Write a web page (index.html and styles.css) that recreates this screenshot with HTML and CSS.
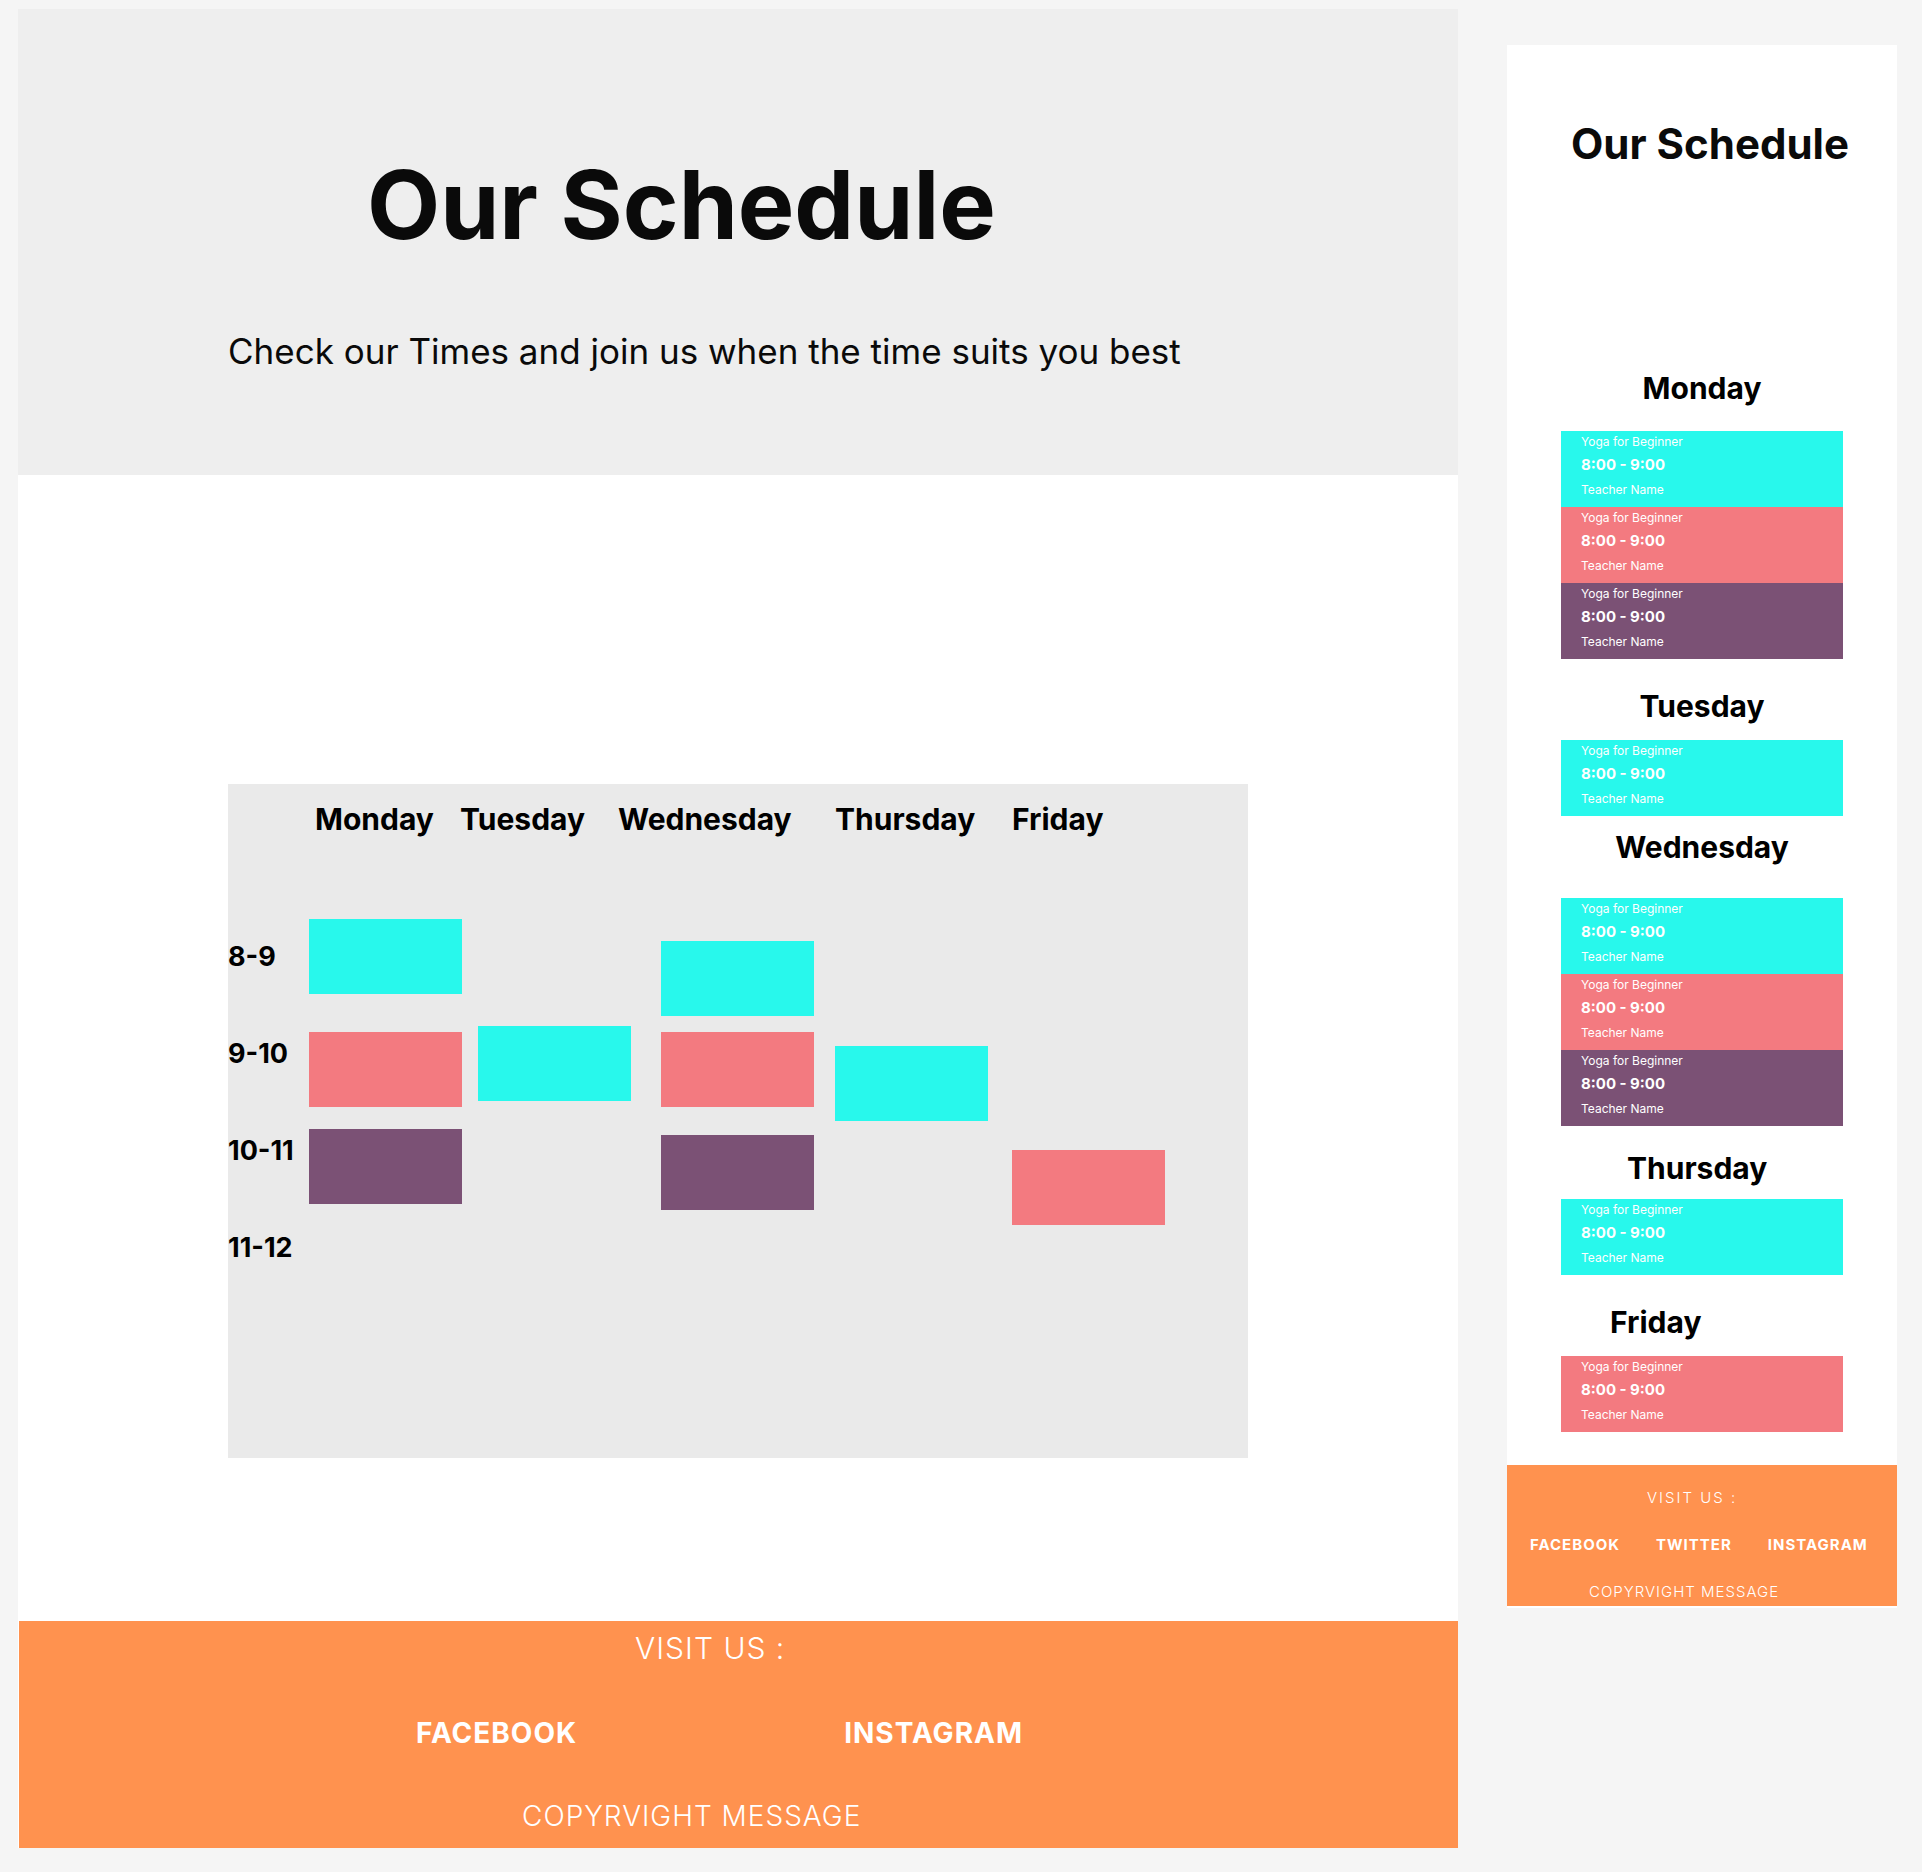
FILE: index.html
```html
<!DOCTYPE html>
<html lang="en">
<head>
  <meta charset="utf-8">
  <meta name="viewport" content="width=device-width, initial-scale=1">
  <title>Our Schedule</title>
  <link rel="stylesheet" href="styles.css">
</head>
<body>
  <div class="board">
    <section class="desktop" aria-label="Desktop schedule">
      <header class="hero">
        <h1 class="hero-title">Our Schedule</h1>
        <p class="hero-text">Check our Times and join us when the time suits you best</p>
      </header>

      <div class="desktop-body">
        <table class="timetable">
          <thead>
            <tr>
              <td></td>
              <th scope="col">Monday</th>
              <th scope="col">Tuesday</th>
              <th scope="col">Wednesday</th>
              <th scope="col">Thursday</th>
              <th scope="col">Friday</th>
            </tr>
          </thead>
          <tbody>
            <tr>
              <th scope="row">8-9</th>
              <td><div class="slot cyan"></div></td>
              <td></td>
              <td><div class="slot cyan late"></div></td>
              <td></td>
              <td></td>
            </tr>
            <tr>
              <th scope="row">9-10</th>
              <td><div class="slot pink quarter"></div></td>
              <td><div class="slot cyan early"></div></td>
              <td><div class="slot pink quarter"></div></td>
              <td><div class="slot cyan half"></div></td>
              <td></td>
            </tr>
            <tr>
              <th scope="row">10-11</th>
              <td><div class="slot purple quarter"></div></td>
              <td></td>
              <td><div class="slot purple late"></div></td>
              <td></td>
              <td><div class="slot pink last"></div></td>
            </tr>
            <tr>
              <th scope="row">11-12</th>
              <td></td>
              <td></td>
              <td></td>
              <td></td>
              <td></td>
            </tr>
          </tbody>
        </table>
      </div>

      <footer class="footer footer-wide">
        <p class="visit">VISIT US :</p>
        <nav class="social" aria-label="Social media">
          <a href="#facebook">FACEBOOK</a>
          <a href="#instagram">INSTAGRAM</a>
        </nav>
        <p class="copyright">COPYRVIGHT MESSAGE</p>
      </footer>
    </section>

    <section class="mobile" aria-label="Mobile schedule">
      <h2 class="mobile-title">Our Schedule</h2>

      <div class="days">
        <section class="day monday">
          <h3>Monday</h3>
          <article class="lesson cyan">
            <p>Yoga for Beginner</p>
            <p class="time">8:00 - 9:00</p>
            <p>Teacher Name</p>
          </article>
          <article class="lesson pink">
            <p>Yoga for Beginner</p>
            <p class="time">8:00 - 9:00</p>
            <p>Teacher Name</p>
          </article>
          <article class="lesson purple">
            <p>Yoga for Beginner</p>
            <p class="time">8:00 - 9:00</p>
            <p>Teacher Name</p>
          </article>
        </section>

        <section class="day tuesday">
          <h3>Tuesday</h3>
          <article class="lesson cyan">
            <p>Yoga for Beginner</p>
            <p class="time">8:00 - 9:00</p>
            <p>Teacher Name</p>
          </article>
        </section>

        <section class="day wednesday">
          <h3>Wednesday</h3>
          <article class="lesson cyan">
            <p>Yoga for Beginner</p>
            <p class="time">8:00 - 9:00</p>
            <p>Teacher Name</p>
          </article>
          <article class="lesson pink">
            <p>Yoga for Beginner</p>
            <p class="time">8:00 - 9:00</p>
            <p>Teacher Name</p>
          </article>
          <article class="lesson purple">
            <p>Yoga for Beginner</p>
            <p class="time">8:00 - 9:00</p>
            <p>Teacher Name</p>
          </article>
        </section>

        <section class="day thursday">
          <h3>Thursday</h3>
          <article class="lesson cyan">
            <p>Yoga for Beginner</p>
            <p class="time">8:00 - 9:00</p>
            <p>Teacher Name</p>
          </article>
        </section>

        <section class="day friday">
          <h3>Friday</h3>
          <article class="lesson pink">
            <p>Yoga for Beginner</p>
            <p class="time">8:00 - 9:00</p>
            <p>Teacher Name</p>
          </article>
        </section>
      </div>

      <footer class="footer footer-narrow">
        <p class="visit">VISIT US :</p>
        <nav class="social" aria-label="Social media, mobile">
          <a href="#facebook">FACEBOOK</a>
          <a href="#twitter">TWITTER</a>
          <a href="#instagram">INSTAGRAM</a>
        </nav>
        <p class="copyright">COPYRVIGHT MESSAGE</p>
      </footer>
    </section>
  </div>
</body>
</html>
```
FILE: styles.css
```css
* {
  box-sizing: border-box;
}

body {
  margin: 0;
  background: #f5f5f5;
  color: #000;
  font-family: Inter, "Liberation Sans", sans-serif;
}

h1, h2, h3, p {
  margin: 0;
}

.cyan { background: #28f8ec; }
.pink { background: #f37a80; }
.purple { background: #7b5175; }

.board {
  display: grid;
  grid-template-columns: minmax(0, 1440fr) minmax(0, 390fr);
  align-items: start;
  gap: 49px;
  padding: 9px 25px 24px 18px;
}

/* Desktop layout */

.desktop,
.mobile {
  background: #fff;
}

.hero {
  padding: 138px 210px 102px;
  background: #eee;
  color: #0a0a0a;
}

.hero-title {
  margin-left: 139px;
  font-size: 95px;
  font-weight: 700;
  line-height: 116px;
  white-space: nowrap;
}

.hero-text {
  margin-top: 66px;
  font-size: 35px;
  line-height: 44px;
}

.desktop-body {
  padding: 309px 210px 163px;
}

.timetable {
  display: block;
  padding: 17px 0 162px;
  background: #eaeaea;
}

.timetable thead,
.timetable tbody {
  display: block;
}

.timetable tr {
  display: grid;
}

.timetable th,
.timetable td {
  min-width: 0;
  padding: 0;
  font-weight: 700;
  text-align: left;
}

.timetable thead {
  padding-bottom: 71px;
  font-size: 30px;
  line-height: 36px;
}

.timetable thead tr {
  grid-template-columns: 87fr 145fr 158fr 217fr 177fr 236fr;
}

.timetable tbody {
  font-size: 27px;
  line-height: 32px;
}

.timetable tbody tr {
  grid-template-columns: 81fr 169fr 183fr 174fr 177fr 236fr;
  grid-template-rows: 97px;
}

.timetable tbody th {
  align-self: center;
}

.slot {
  width: 153px;
  height: 75px;
  margin-top: 11px;
}

.slot.early { margin-top: 21px; }
.slot.quarter { margin-top: 27px; }
.slot.late { margin-top: 33px; }
.slot.half { margin-top: 41px; }
.slot.last { margin-top: 48px; }

/* Footers */

.footer {
  background: #ff924f;
  color: #fff;
  font-weight: 300;
  letter-spacing: 1px;
}

.social {
  display: flex;
}

.social a {
  color: inherit;
  font-weight: 700;
  text-decoration: none;
}

.footer-wide {
  margin-left: 1px;
  padding: 9px 0 15px;
  font-size: 28px;
  line-height: 34px;
}

.footer-wide .visit {
  padding-left: 616px;
  font-size: 30px;
  line-height: 36px;
}

.footer-wide .social {
  gap: 267px;
  margin: 50px 0 49px;
  padding-left: 397px;
}

.footer-wide .copyright {
  padding-left: 503px;
}

.footer-narrow {
  margin-top: 33px;
  padding: 24px 0 5px;
  font-size: 15px;
  line-height: 18px;
}

.footer-narrow .visit {
  padding-left: 140px;
  letter-spacing: 2px;
}

.footer-narrow .social {
  gap: 36px;
  margin: 29px 0;
  padding-left: 23px;
}

.footer-narrow .copyright {
  padding-left: 82px;
}

/* Mobile layout */

.mobile {
  margin-top: 36px;
  padding: 74px 0 2px;
}

.mobile-title {
  padding-left: 64px;
  color: #0a0a0a;
  font-size: 42px;
  font-weight: 700;
  line-height: 50px;
  white-space: nowrap;
}

.days {
  margin-top: 201px;
  padding: 0 54px;
}

.day h3 {
  font-size: 30px;
  font-weight: 700;
  line-height: 36px;
  text-align: center;
}

.monday h3 { margin-bottom: 25px; }
.tuesday h3 { margin: 29px 0 16px; }
.wednesday h3 { margin: 13px 0 33px; }

.thursday h3 {
  margin: 24px 0 13px;
  padding-left: 66px;
  text-align: left;
}

.friday h3 {
  margin: 29px 0 16px;
  padding-left: 49px;
  text-align: left;
}

.lesson {
  padding: 3px 20px 9px;
  color: #fff;
  font-size: 12px;
  line-height: 16px;
}

.lesson .time {
  margin: 6px 0 8px;
  font-size: 15px;
  font-weight: 700;
  line-height: 18px;
}
```
